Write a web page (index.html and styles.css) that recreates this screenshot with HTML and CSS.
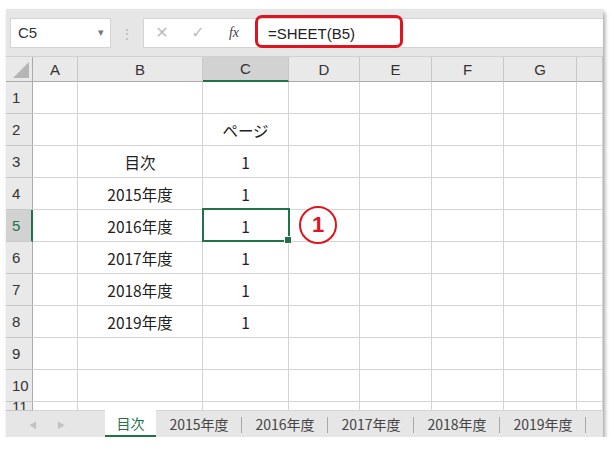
FILE: index.html
```html
<!DOCTYPE html>
<html lang="ja">
<head>
  <meta charset="UTF-8">
  <link rel="stylesheet" href="styles.css">
  <title>SHEET</title>
</head>
<body>
  <div class="window">
    <div class="formula-bar">
      <div class="name-box">
        <span>C5</span>
        <span class="drop">&#9662;</span>
      </div>
      <div class="grip">&#8942;</div>
      <div class="fx-box">
        <span class="fx-btn">&#10005;</span>
        <span class="fx-btn">&#10003;</span>
        <span class="fx-label">fx</span>
      </div>
      <div class="formula-input">=SHEET(B5)</div>
    </div>

    <div class="sheet" id="sheet"></div>

    <div class="tab-bar">
      <div class="tab-nav">
        <span>&#9664;</span>
        <span>&#9654;</span>
      </div>
      <div class="tab active">目次</div>
      <div class="tab">2015年度</div>
      <div class="tab">2016年度</div>
      <div class="tab">2017年度</div>
      <div class="tab">2018年度</div>
      <div class="tab">2019年度</div>
    </div>

    <!-- annotations -->
    <div class="mark-formula"></div>
    <div class="active-cell"><span class="handle"></span></div>
    <div class="mark-num">1</div>
  </div>

  <script>
    const sheet = document.getElementById('sheet');
    const cols = ['', 'A', 'B', 'C', 'D', 'E', 'F', 'G', ''];
    const data = {
      2: { C: 'ページ' },
      3: { B: '目次', C: '1' },
      4: { B: '2015年度', C: '1' },
      5: { B: '2016年度', C: '1' },
      6: { B: '2017年度', C: '1' },
      7: { B: '2018年度', C: '1' },
      8: { B: '2019年度', C: '1' }
    };

    // header row
    cols.forEach((c, i) => {
      let cell = document.createElement('div');
      cell.className = i === 0 ? 'head corner' : 'head col';
      if (c === 'C') cell.classList.add('selected');
      cell.innerText = c;
      sheet.appendChild(cell);
    });

    // rows 1..11
    for (let r = 1; r <= 11; r++) {
      let head = document.createElement('div');
      head.className = 'head row';
      if (r === 5) head.classList.add('selected');
      head.innerText = r;
      sheet.appendChild(head);

      cols.slice(1).forEach((c) => {
        let cell = document.createElement('div');
        cell.className = 'cell';
        if (data[r] && data[r][c]) cell.innerText = data[r][c];
        sheet.appendChild(cell);
      });
    }
  </script>
</body>
</html>
```

FILE: styles.css
```css
body {
  margin: 0;
  background: #fff;
  font-family: "Noto Sans CJK JP", "Liberation Sans", sans-serif;
  color: #222;
}

.window {
  position: relative;
  margin: 9px 0 0 6px;
  width: 597px;
  height: 428px;
  background: #e6e6e6;
  box-shadow: 2px 3px 4px rgba(0, 0, 0, 0.35);
  overflow: hidden;
}

/* formula bar */
.formula-bar {
  display: flex;
  align-items: center;
  height: 47px;
  padding-left: 4px;
  box-sizing: border-box;
  background: #e6e6e6;
}

.name-box {
  display: flex;
  align-items: center;
  justify-content: space-between;
  width: 101px;
  height: 30px;
  padding: 0 6px 0 7px;
  box-sizing: border-box;
  background: #fff;
  border: 1px solid #d4d4d4;
  font-family: "Liberation Sans", sans-serif;
  font-size: 15px;
  color: #333;
}

.name-box .drop {
  font-size: 11px;
  color: #777;
}

.grip {
  width: 32px;
  text-align: center;
  color: #b8b8b8;
  font-size: 14px;
}

.fx-box {
  display: flex;
  align-items: center;
  width: 109px;
  height: 30px;
  box-sizing: border-box;
  background: #fff;
  border: 1px solid #d4d4d4;
  border-right: none;
}

.fx-btn {
  width: 36px;
  text-align: center;
  color: #bdbdbd;
  font-size: 16px;
  font-family: "DejaVu Sans", sans-serif;
}

.fx-label {
  width: 36px;
  text-align: center;
  font-family: "Liberation Serif", serif;
  font-style: italic;
  font-size: 14px;
  color: #444;
}

.formula-input {
  flex: 1;
  height: 30px;
  line-height: 30px;
  padding-left: 16px;
  background: #fff;
  border-top: 1px solid #d4d4d4;
  border-bottom: 1px solid #d4d4d4;
  box-sizing: border-box;
  font-family: "Liberation Sans", sans-serif;
  font-size: 15px;
  color: #222;
}

/* grid */
.sheet {
  display: grid;
  grid-template-columns: 27px 45px 125px 86px 71px 72px 72px 73px 26px;
  grid-template-rows: 25px repeat(10, 32px) 9px;
  background: #fff;
  border-top: 1px solid #d0d0d0;
  height: 354px;
  box-sizing: border-box;
}

.head {
  display: flex;
  align-items: center;
  justify-content: center;
  background: #e9e9e9;
  color: #333;
  font-family: "Liberation Sans", sans-serif;
  font-size: 15px;
  box-sizing: border-box;
  overflow: hidden;
}

.head.col {
  border-right: 1px solid #c8c8c8;
  border-bottom: 1px solid #ababab;
}

.head.row {
  justify-content: flex-start;
  padding-left: 6px;
  border-right: 1px solid #ababab;
  border-bottom: 1px solid #c8c8c8;
}

.head.corner {
  position: relative;
  border-right: 1px solid #ababab;
  border-bottom: 1px solid #ababab;
}

.head.corner::after {
  content: "";
  position: absolute;
  right: 3px;
  bottom: 3px;
  border-left: 16px solid transparent;
  border-bottom: 16px solid #b5b5b5;
}

.head.selected {
  background: #d2d2d2;
  color: #217346;
}

.head.col.selected {
  border-bottom: 2px solid #217346;
  color: #333;
}

.head.row.selected {
  border-right: 2px solid #217346;
}

.cell {
  display: flex;
  align-items: center;
  justify-content: center;
  border-right: 1px solid #d4d4d4;
  border-bottom: 1px solid #d4d4d4;
  box-sizing: border-box;
  font-size: 15.5px;
  color: #222;
  overflow: hidden;
}

/* sheet tabs */
.tab-bar {
  display: flex;
  align-items: stretch;
  height: 27px;
  background: #e6e6e6;
  border-top: 1px solid #c6c6c6;
  box-sizing: border-box;
}

.tab-nav {
  display: flex;
  align-items: center;
  gap: 20px;
  width: 99px;
  padding-left: 23px;
  box-sizing: border-box;
  font-size: 8px;
  color: #c2c2c2;
}

.tab {
  display: flex;
  align-items: center;
  justify-content: center;
  width: 86px;
  font-size: 14px;
  color: #444;
  position: relative;
}

.tab::after {
  content: "";
  position: absolute;
  right: 0;
  top: 6px;
  height: 16px;
  border-right: 1px solid #a8a8a8;
}

.tab.active {
  width: 51px;
  margin-top: -1px;
  background: #fff;
  color: #217346;
  border-bottom: 2px solid #217346;
}

.tab.active::after {
  display: none;
}

/* overlays */
.mark-formula {
  position: absolute;
  left: 249px;
  top: 6px;
  width: 148px;
  height: 33px;
  border: 3px solid #e0141e;
  border-radius: 7px;
  box-sizing: border-box;
}

.active-cell {
  position: absolute;
  left: 196px;
  top: 199px;
  width: 88px;
  height: 34px;
  border: 2px solid #217346;
  box-sizing: border-box;
}

.active-cell .handle {
  position: absolute;
  right: -4px;
  bottom: -4px;
  width: 6px;
  height: 6px;
  background: #217346;
  border: 1px solid #fff;
}

.mark-num {
  position: absolute;
  left: 293px;
  top: 197px;
  width: 38px;
  height: 38px;
  border: 2.5px solid #e0141e;
  border-radius: 50%;
  box-sizing: border-box;
  display: flex;
  align-items: center;
  justify-content: center;
  font-family: "Liberation Sans", sans-serif;
  font-weight: bold;
  font-size: 22px;
  color: #e0141e;
  background: #fff;
}
```
